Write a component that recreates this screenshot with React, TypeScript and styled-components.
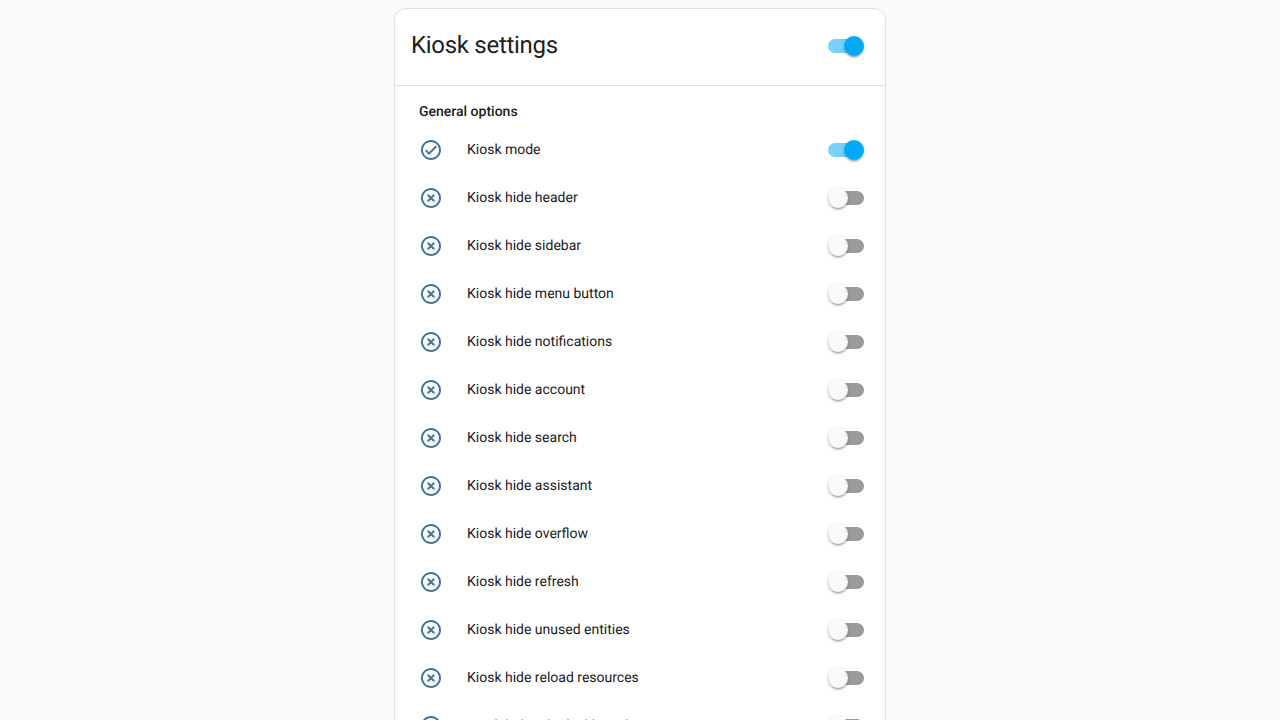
import React, { useState } from 'react';
import styled, { createGlobalStyle } from 'styled-components';

const GlobalStyle = createGlobalStyle`
  html, body { margin: 0; height: 100%; overflow: hidden; background: #fafafa; }
  body {
    font-family: Roboto, "Noto Sans", sans-serif;
    color: #212121;
    -webkit-font-smoothing: antialiased;
    text-rendering: geometricPrecision;
  }
`;

const Page = styled.main`
  display: flex;
  justify-content: center;
  align-items: flex-start;
  height: 100vh;
  overflow: hidden;
  padding-top: 8px;
  box-sizing: border-box;
`;

const Card = styled.section`
  box-sizing: border-box;
  width: 492px;
  background: #fff;
  border: 1px solid #e0e0e0;
  border-radius: 12px;
  flex-shrink: 0;
`;

const CardHeader = styled.header`
  display: flex;
  justify-content: space-between;
  align-items: center;
  box-sizing: border-box;
  height: 77px;
  padding: 0 21px 3px 16px;
  border-bottom: 1px solid #e0e0e0;
`;

const Title = styled.h1`
  margin: 0;
  padding-bottom: 2px;
  font-size: 24px;
  font-weight: 400;
  line-height: 48px;
  letter-spacing: -0.012em;
`;

const SectionLabel = styled.h2`
  margin: 0;
  padding: 16px 24px 4px;
  font-size: 14px;
  font-weight: 500;
  line-height: 20px;
`;

const Row = styled.div`
  display: flex;
  align-items: center;
  height: 48px;
  padding: 0 21px 0 24px;
`;

const StateIcon = styled.svg`
  width: 24px;
  height: 24px;
  fill: #44739e;
  flex-shrink: 0;
`;

const Name = styled.span`
  flex: 1;
  margin-left: 24px;
  font-size: 14px;
  line-height: 20px;
`;

const Track = styled.button<{ $on: boolean }>`
  display: flex;
  align-items: center;
  justify-content: ${(p) => (p.$on ? 'flex-end' : 'flex-start')};
  width: 36px;
  height: 14px;
  padding: 0;
  border: 0;
  border-radius: 7px;
  background: ${(p) => (p.$on ? '#78d1fb' : '#9b9b9b')};
  cursor: pointer;
`;

const Thumb = styled.span<{ $on: boolean }>`
  width: 20px;
  height: 20px;
  flex-shrink: 0;
  border-radius: 50%;
  background: ${(p) => (p.$on ? '#03a9f4' : '#fafafa')};
  box-shadow: 0 3px 1px -2px rgba(0, 0, 0, 0.2), 0 2px 2px 0 rgba(0, 0, 0, 0.14),
    0 1px 5px 0 rgba(0, 0, 0, 0.12);
`;

const CHECK =
  'M12 2C6.5 2 2 6.5 2 12S6.5 22 12 22 22 17.5 22 12 17.5 2 12 2M12 20C7.59 20 4 16.41 4 12S7.59 4 12 4 20 7.59 20 12 16.41 20 12 20M16.59 7.58L10 14.17L7.41 11.59L6 13L10 17L18 9L16.59 7.58Z';
const CROSS =
  'M12,20C7.59,20 4,16.41 4,12C4,7.59 7.59,4 12,4C16.41,4 20,7.59 20,12C20,16.41 16.41,20 12,20M12,2C6.47,2 2,6.47 2,12C2,17.53 6.47,22 12,22C17.53,22 22,17.53 22,12C22,6.47 17.53,2 12,2M14.59,8L12,10.59L9.41,8L8,9.41L10.59,12L8,14.59L9.41,16L12,13.41L14.59,16L16,14.59L13.41,12L16,9.41L14.59,8Z';

const OPTIONS = [
  'Kiosk mode',
  'Kiosk hide header',
  'Kiosk hide sidebar',
  'Kiosk hide menu button',
  'Kiosk hide notifications',
  'Kiosk hide account',
  'Kiosk hide search',
  'Kiosk hide assistant',
  'Kiosk hide overflow',
  'Kiosk hide refresh',
  'Kiosk hide unused entities',
  'Kiosk hide reload resources',
  'Kiosk hide edit dashboard',
];

function Toggle({ on, label, onToggle }: { on: boolean; label: string; onToggle: () => void }) {
  return (
    <Track $on={on} type="button" role="switch" aria-checked={on} aria-label={label} onClick={onToggle}>
      <Thumb $on={on} />
    </Track>
  );
}

export default function App() {
  const [states, setStates] = useState<boolean[]>(OPTIONS.map((_, i) => i === 0));
  const anyOn = states.some(Boolean);
  const toggle = (index: number) => setStates((s) => s.map((v, i) => (i === index ? !v : v)));
  const toggleAll = () => setStates((s) => s.map(() => !anyOn));

  return (
    <>
      <GlobalStyle />
      <Page>
        <Card>
          <CardHeader>
            <Title>Kiosk settings</Title>
            <Toggle on={anyOn} label="Kiosk settings" onToggle={toggleAll} />
          </CardHeader>
          <SectionLabel>General options</SectionLabel>
          {OPTIONS.map((name, i) => (
            <Row key={name}>
              <StateIcon viewBox="0 0 24 24">
                <path d={states[i] ? CHECK : CROSS} />
              </StateIcon>
              <Name>{name}</Name>
              <Toggle on={states[i]} label={name} onToggle={() => toggle(i)} />
            </Row>
          ))}
        </Card>
      </Page>
    </>
  );
}
